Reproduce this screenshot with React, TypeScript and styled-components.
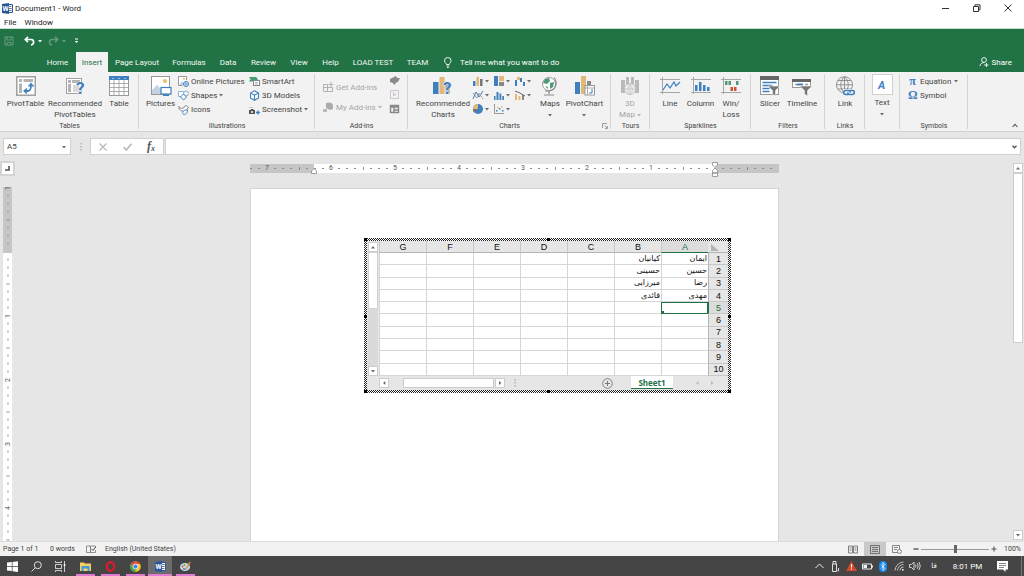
import React from "react";
import styled, { createGlobalStyle } from "styled-components";

const green = "#217346";
const blue = "#3f7fbf";
const tan = "#e3b778";
const ui = `Roboto, "Open Sans", sans-serif`;

const GlobalStyle = createGlobalStyle`
  *, *::before, *::after { box-sizing: border-box; }
  body { margin: 0; font-family: ${ui}; font-size: 8px; line-height: 11px; color: #444; }
  button, input { font: inherit; color: inherit; margin: 0; padding: 0; border: 0; background: none; border-radius: 0; }
  svg { display: block; flex: none; overflow: visible; }
`;

const AppShell = styled.div`
  display: flex;
  flex-direction: column;
  height: 100vh;
  overflow: hidden;
  background: #e6e6e6;
`;

/* ---------- title and menu ---------- */
const TitleBar = styled.header`
  display: flex;
  align-items: center;
  height: 16px;
  padding: 0 2px;
  gap: 2px;
  background: #fff;
  color: #222;
`;
const TitleText = styled.h1`
  flex: 1;
  margin: 0;
  font-size: 8px;
  font-weight: 400;
`;
const WindowButton = styled.button`
  display: flex;
  justify-content: center;
  width: 29px;
`;
const MenuBar = styled.nav`
  display: flex;
  gap: 8px;
  height: 13px;
  padding: 0 4px;
  background: #fff;
  border-bottom: 1px solid #c8dccf;
  color: #222;
`;

/* ---------- green header ---------- */
const QuickBar = styled.div`
  display: flex;
  align-items: center;
  height: 23px;
  padding-left: 4px;
  background: ${green};
  color: #fff;
`;
const QuickButton = styled.button<{ $w: number; $dim?: boolean }>`
  display: flex;
  align-items: center;
  gap: 3px;
  width: ${(p) => p.$w}px;
  color: #fff;
  opacity: ${(p) => (p.$dim ? 0.3 : 1)};
`;
const TabStrip = styled.nav`
  display: flex;
  align-items: stretch;
  height: 20px;
  padding: 0 12px 0 39px;
  background: ${green};
  color: #fff;
`;
const Tab = styled.button<{ $w: number; $active?: boolean }>`
  width: ${(p) => p.$w}px;
  white-space: nowrap;
  color: ${(p) => (p.$active ? green : "#f2f8f4")};
  background: ${(p) => (p.$active ? "#f2f2f2" : "transparent")};
`;
const TellMe = styled.button`
  display: flex;
  align-items: center;
  gap: 7px;
  margin-left: 8px;
  color: #fff;
`;
const Share = styled.button`
  display: flex;
  align-items: center;
  gap: 3px;
  margin-left: auto;
  color: #fff;
`;

/* ---------- ribbon ---------- */
const Ribbon = styled.section`
  display: flex;
  height: 60px;
  background: #f2f2f2;
  border-bottom: 1px solid #d2d2d2;
`;
const Group = styled.div<{ $w: number }>`
  display: flex;
  flex-direction: column;
  flex: none;
  width: ${(p) => p.$w}px;
  background: linear-gradient(#d4d4d4, #d4d4d4) right 2px / 1px 55px no-repeat;
  background-position: right 2px;
`;
const GroupBody = styled.div<{ $pad?: number }>`
  display: flex;
  align-items: flex-start;
  height: 49px;
  padding-left: ${(p) => p.$pad ?? 4}px;
`;
const GroupFoot = styled.div`
  display: flex;
  align-items: center;
  justify-content: center;
  position: relative;
  height: 11px;
  font-size: 7px;
  line-height: 10px;
`;
const Launcher = styled.button`
  position: absolute;
  right: 3px;
  top: 3px;
`;
const BigButton = styled.button<{ $w: number; $dim?: boolean }>`
  display: flex;
  flex-direction: column;
  align-items: center;
  width: ${(p) => p.$w}px;
  padding-top: 4px;
  gap: 2px;
  white-space: nowrap;
  opacity: ${(p) => (p.$dim ? 0.45 : 1)};
`;
const Caption = styled.span`
  display: flex;
  flex-direction: column;
  align-items: center;
`;
const CaptionLine = styled.span`
  display: flex;
  align-items: center;
  justify-content: center;
  gap: 2px;
  height: 11px;
`;
const Stack = styled.div<{ $w: number; $roomy?: boolean }>`
  display: flex;
  flex-direction: column;
  width: ${(p) => p.$w}px;
  padding-top: ${(p) => (p.$roomy ? 5 : 2)}px;
`;
const SmallButton = styled.button<{ $dim?: boolean; $h?: number }>`
  display: flex;
  align-items: center;
  gap: 2px;
  height: ${(p) => p.$h ?? 14}px;
  white-space: nowrap;
  opacity: ${(p) => (p.$dim ? 0.45 : 1)};
`;
const SymbolButton = styled(SmallButton)`
  gap: 3px;
`;
const ChartGrid = styled.div`
  display: grid;
  grid-template-columns: repeat(3, 21px);
  grid-auto-rows: 14px;
  padding-top: 2px;
`;
const TextTile = styled.span`
  display: flex;
  align-items: center;
  justify-content: center;
  width: 21px;
  height: 21px;
  border: 1px solid #d0d0d0;
  background: #fff;
`;
const TextButton = styled(BigButton)`
  padding-top: 2px;
`;
const SymbolGlyph = styled.span`
  width: 9px;
  font-family: "Liberation Serif", serif;
  font-size: 12px;
  font-weight: 700;
  color: ${blue};
`;
const Collapse = styled.button`
  margin: auto 6px 3px auto;
`;

/* ---------- formula bar ---------- */
const FormulaBar = styled.div`
  display: flex;
  align-items: center;
  height: 29px;
  padding: 0 3px;
`;
const NameBox = styled.div`
  display: flex;
  align-items: center;
  width: 68px;
  height: 17px;
  padding: 0 4px 0 3px;
  background: #fff;
  border: 1px solid #d0d0d0;
`;
const NameInput = styled.input`
  flex: 1;
  min-width: 0;
`;
const Grip = styled.span`
  display: flex;
  justify-content: center;
  width: 19px;
`;
const FormulaButtons = styled.div`
  display: flex;
  width: 74px;
  height: 17px;
  background: #fff;
  border: 1px solid #d0d0d0;
`;
const FormulaButton = styled.button`
  display: flex;
  flex: 1;
  align-items: center;
  justify-content: center;
`;
const FormulaField = styled.div`
  display: flex;
  flex: 1;
  align-items: center;
  height: 17px;
  margin-left: 1px;
  padding-right: 3px;
  background: #fff;
  border: 1px solid #d0d0d0;
`;

/* ---------- document area ---------- */
const Workspace = styled.main`
  display: flex;
  flex: 1;
  min-height: 0;
`;
const LeftRail = styled.div`
  display: flex;
  flex-direction: column;
  flex: none;
  width: 16px;
  min-height: 0;
`;
const TabSelector = styled.button`
  display: flex;
  align-items: center;
  justify-content: center;
  flex: none;
  width: 15px;
  height: 15px;
  margin-bottom: 8px;
  background: #fdfdfd;
  border: 2px solid #d4d4d4;
`;
const VRuler = styled.div`
  flex: 1;
  width: 9px;
  min-height: 0;
  margin-left: 3px;
  overflow: hidden;
  color: #555;
  background: linear-gradient(transparent 3px, #c6c6c6 3px 69px, #fff 69px);
`;
const VTick = styled.span`
  display: flex;
  align-items: center;
  justify-content: center;
  height: 8px;
  font-size: 7px;
  line-height: 8px;
  transform: rotate(-90deg);
`;
const Canvas = styled.div`
  display: flex;
  flex-direction: column;
  align-items: center;
  flex: 1;
  min-width: 0;
`;
const HRuler = styled.div`
  position: relative;
  flex: none;
  width: 529px;
  height: 9px;
  margin: 3px 0 15px;
  color: #555;
  background: linear-gradient(to right, #c6c6c6 64px, #fff 64px 465px, #c6c6c6 465px);
`;
const HTicks = styled.div`
  display: flex;
  justify-content: flex-end;
  height: 9px;
  padding-right: 4px;
  overflow: hidden;
`;
const HTick = styled.span`
  display: flex;
  flex: none;
  align-items: center;
  justify-content: center;
  width: 8px;
  font-size: 7px;
  line-height: 9px;
`;
const TickMark = styled.i<{ $tall?: boolean }>`
  width: ${(p) => (p.$tall ? 1 : 2)}px;
  height: ${(p) => (p.$tall ? 3 : 1)}px;
  background: #8c8c8c;
`;
const Marker = styled.svg<{ $x: number }>`
  position: absolute;
  left: ${(p) => p.$x}px;
  top: -2px;
`;
const Page = styled.article`
  flex: 1;
  width: 529px;
  min-height: 0;
  padding: 49px 0 0 113px;
  background: #fff;
  border: 1px solid #d4d4d4;
  border-bottom: 0;
`;
const VScroll = styled.div`
  display: flex;
  flex-direction: column;
  flex: none;
  width: 11px;
  padding: 2px 1px 1px 0;
`;
const ScrollButton = styled.button`
  display: flex;
  align-items: center;
  justify-content: center;
  flex: none;
  width: 10px;
  height: 10px;
  background: #fff;
  border: 1px solid #cdcdcd;
`;
const ScrollThumb = styled.div`
  width: 10px;
  height: 45%;
  background: #fff;
  border: 1px solid #cdcdcd;
`;
const Spacer = styled.div`
  flex: 1;
`;

/* ---------- embedded sheet ---------- */
const SheetFrame = styled.div`
  position: relative;
  width: 367px;
  padding: 3px;
  background: repeating-conic-gradient(#222 0 25%, #fff 0 50%) 0 0 / 2px 2px;
`;
const Handle = styled.i<{ $x: string; $y: string }>`
  position: absolute;
  left: ${(p) => p.$x};
  top: ${(p) => p.$y};
  width: 3px;
  height: 3px;
  background: #000;
`;
const SheetTop = styled.div`
  display: flex;
  background: #e6e6e6;
`;
const SheetScroll = styled.div`
  display: flex;
  flex-direction: column;
  width: 12px;
  padding: 1px 1px 0 1px;
`;
const SheetTrack = styled.div`
  flex: 1;
  width: 10px;
  background: #dadada;
`;
const SheetThumb = styled.div`
  width: 10px;
  height: 57px;
  background: #fff;
  border: 1px solid #d0d0d0;
`;
const Grid = styled.table`
  flex: 1;
  height: 135px;
  border-collapse: separate;
  border-spacing: 0;
  table-layout: fixed;
  font-family: "Liberation Sans", Arial, sans-serif;
  font-size: 9px;
  line-height: 10px;
  color: #111;
`;
const HeadCell = styled.th<{ $on?: boolean; $corner?: boolean }>`
  width: ${(p) => (p.$corner ? 20 : 47)}px;
  height: 12px;
  padding: 0;
  font-weight: 400;
  color: ${(p) => (p.$on ? green : "#111")};
  background: ${(p) => (p.$on ? "#dcdcdc" : "#e6e6e6")};
  border-bottom: 1px solid ${(p) => (p.$on ? green : "#b4b4b4")};
  border-left: ${(p) => (p.$corner ? 0 : 1)}px solid #c8c8c8;
`;
const RowHead = styled.th<{ $on?: boolean }>`
  padding: 0;
  font-weight: 400;
  color: ${(p) => (p.$on ? green : "#111")};
  background: ${(p) => (p.$on ? "#dcdcdc" : "#e6e6e6")};
  border-bottom: 1px solid #c8c8c8;
  border-left: 1px solid ${(p) => (p.$on ? green : "#b4b4b4")};
`;
const Cell = styled.td<{ $on?: boolean }>`
  position: relative;
  padding: 0 1px;
  text-align: right;
  white-space: nowrap;
  font-family: "DejaVu Sans", sans-serif;
  font-size: 8px;
  background: #fff;
  border-bottom: 1px solid #d6d6d6;
  border-left: 1px solid #d6d6d6;
  ${(p) => (p.$on ? `outline: 1px solid ${green}; outline-offset: -1px; z-index: 1;` : "")}
`;
const FillHandle = styled.i`
  position: absolute;
  left: -1px;
  bottom: -1px;
  width: 3px;
  height: 3px;
  background: ${green};
`;
const SheetBottom = styled.div`
  display: flex;
  align-items: center;
  height: 14px;
  padding-left: 12px;
  background: #e6e6e6;
`;
const SheetHThumb = styled.div`
  width: 91px;
  height: 10px;
  margin: 0 1px 0 14px;
  background: #fff;
  border: 1px solid #cdcdcd;
`;
const AddSheet = styled.button`
  margin-left: 78px;
`;
const SheetTab = styled.button`
  align-self: flex-start;
  width: 42px;
  height: 13px;
  margin: 0 22px 0 18px;
  background: #fff;
  border-bottom: 1px solid ${green};
  color: ${green};
  font-family: "Open Sans", sans-serif;
  font-weight: 700;
`;
const SheetArrows = styled.span`
  display: flex;
  gap: 11px;
`;

/* ---------- status bar ---------- */
const StatusBar = styled.footer`
  display: flex;
  align-items: center;
  height: 15px;
  padding: 0 3px;
  background: #f2f2f2;
  border-top: 1px solid #dcdcdc;
  font-size: 7px;
  line-height: 10px;
`;
const StatusItem = styled.span<{ $w: number }>`
  width: ${(p) => p.$w}px;
  white-space: nowrap;
`;
const ViewButton = styled.button<{ $on?: boolean }>`
  display: flex;
  align-items: center;
  justify-content: center;
  width: 22px;
  height: 14px;
  background: ${(p) => (p.$on ? "#c8c8c8" : "transparent")};
`;
const ViewButtons = styled.div`
  display: flex;
  margin-right: 4px;
`;
const ZoomButton = styled.button`
  display: flex;
  justify-content: center;
  width: 8px;
`;
const ZoomSlider = styled.input`
  appearance: none;
  width: 68px;
  height: 8px;
  margin: 0 1px;
  background: linear-gradient(#9a9a9a, #9a9a9a) center / 100% 1px no-repeat;
  &::-webkit-slider-thumb {
    appearance: none;
    width: 3px;
    height: 8px;
    background: #666;
  }
`;
const ZoomLabel = styled.span`
  width: 23px;
  text-align: right;
`;

/* ---------- taskbar ---------- */
const TaskBar = styled.footer`
  display: flex;
  align-items: stretch;
  height: 20px;
  background: #454545;
  color: #fff;
`;
const TaskButton = styled.button`
  display: flex;
  align-items: center;
  justify-content: center;
  width: 24px;
`;
const RunningApps = styled.div`
  display: flex;
  gap: 1px;
  margin-left: 1px;
`;
const AppButton = styled(TaskButton)<{ $on?: boolean }>`
  background: linear-gradient(#e07bd3, #e07bd3) bottom / ${(p) => (p.$on ? 24 : 19)}px 2px no-repeat
    ${(p) => (p.$on ? "#6c6c6c" : "transparent")};
`;
const Tray = styled.div`
  display: flex;
  margin-left: auto;
  padding-right: 7px;
  margin-right: 2px;
  border-right: 1px solid #777;
`;
const TrayButton = styled.button<{ $w?: number }>`
  display: flex;
  align-items: center;
  justify-content: center;
  width: ${(p) => p.$w ?? 16}px;
  white-space: nowrap;
  color: #fff;
`;
const Language = styled(TrayButton)`
  font-family: "DejaVu Sans", sans-serif;
  font-size: 7px;
`;

/* ---------- drawings ---------- */
type ArtProps = { w: number; h?: number; children: React.ReactNode };
const Art = ({ w, h = w, children }: ArtProps) => (
  <svg width={w} height={h} viewBox={`0 0 ${w} ${h}`} fill="none" aria-hidden="true">
    {children}
  </svg>
);

const Arrow = ({ dir = "down", color = "#6c6c6c" }: { dir?: "up" | "down" | "left" | "right"; color?: string }) => {
  const d = { down: "M0 1h4L2 3.4z", up: "M0 3.4h4L2 1z", left: "M3.4 0v4L1 2z", right: "M1 0v4L3.4 2z" }[dir];
  return (
    <Art w={4}>
      <path d={d} fill={color} />
    </Art>
  );
};

const WordArt = () => (
  <Art w={11}>
    <path d="M5.5 1.5h5v8h-5" stroke="#2b579a" fill="#fff" />
    <path d="M7 3.5h2.5M7 5.5h2.5M7 7.5h2.5" stroke="#2b579a" strokeWidth=".8" />
    <path d="M0 1l7-1v11L0 10z" fill="#2b579a" />
    <text x=".4" y="8" fontSize="7" fontWeight="700" fill="#fff">W</text>
  </Art>
);

const Question = ({ x }: { x: number }) => (
  <text x={x} y="18" fontSize="17" fontWeight="700" fill={blue} stroke="#f2f2f2" strokeWidth="1" paintOrder="stroke">?</text>
);

const PivotArt = () => (
  <Art w={20}>
    <rect x=".75" y=".75" width="18.5" height="18.5" fill="#fff" stroke="#a0a0a0" strokeWidth="1.5" />
    <path d="M3 3h3v3H3zM7.5 3H17v3H7.5zM3 7.5h3V17H3z" fill="#b4b4b4" />
    <path d="M9 15h2.5c3 0 3.5-2 3.5-6" stroke={blue} strokeWidth="1.8" />
    <path d="M12.5 10.5L15 7.5l2.5 3M11 12.5L8 15l3 2.5" stroke={blue} strokeWidth="1.3" />
  </Art>
);
const RecPivotArt = () => (
  <Art w={20}>
    <rect x="1.5" y="2.5" width="15" height="15" fill="#fff" stroke="#a0a0a0" />
    <path d="M3 4h3v3H3zM7 4h8v3H7zM3 8h3v8H3z" fill="#b4b4b4" />
    <path d="M8 9h6v7H8z" fill="#d8d8d8" />
    <Question x={11} />
  </Art>
);
const TableArt = () => (
  <Art w={20}>
    <rect x=".5" y=".5" width="19" height="19" fill="#fff" stroke="#999" />
    <path d="M0 0h20v4H0z" fill={blue} />
    <path d="M3 2l1 1 1-1zM9 2l1 1 1-1zM15 2l1 1 1-1z" fill="#fff" />
    <path d="M5 4v16M10 4v16M15 4v16M0 7.5h20M0 11.5h20M0 15.5h20" stroke="#999" strokeWidth=".8" />
  </Art>
);
const PictureArt = () => (
  <Art w={22} h={20}>
    <rect x="1.5" y=".5" width="18" height="18" fill="#fff" stroke="#999" />
    <path d="M2 18v-4l5-5 4 4v5z" fill="#c3d3e2" />
    <circle cx="15" cy="5" r="2" fill="#eeba63" />
    <rect x="11" y="11.5" width="10" height="6.5" fill="#fff" stroke={blue} strokeWidth="1.2" />
    <path d="M13 19.5h6M16 18v2" stroke={blue} />
  </Art>
);
const OnlinePictureArt = () => (
  <Art w={11}>
    <path d="M8.5 4V.5h-8v9h4" fill="#fff" stroke="#999" />
    <path d="M1 9l3-4 2 3v1z" fill="#c3d3e2" />
    <circle cx="6" cy="2.8" r="1" fill="#eeba63" />
    <circle cx="8" cy="8" r="2.5" fill="#fff" stroke={blue} />
    <path d="M5.5 8h5M8 5.5v5" stroke={blue} strokeWidth=".7" />
  </Art>
);
const ShapesArt = () => (
  <Art w={11}>
    <path d="M.5 1.5h5v5h-5z" fill="#fff" stroke="#8db3d9" />
    <circle cx="8" cy="3.5" r="2.5" fill="#f2f2f2" stroke="#8db3d9" />
    <path d="M5.5 4l3 3-3 3-3-3z" fill="#fff" stroke={blue} />
  </Art>
);
const IconsArt = () => (
  <Art w={11}>
    <path d="M.8 2.5c2 2.5 3.5 2 5 1.5C6 1.5 9 .8 9.5 3l1 .5-1 .7C9 7 6.5 8 4 7 2 6.5 1 4.5.8 2.5z" fill="#fff" stroke="#777" strokeWidth=".9" />
    <path d="M5.5 10.5c-2-3 0-4.5 4-4.5 0 3-1 4.5-4 4.5z" fill="#fff" stroke={blue} strokeWidth=".9" />
  </Art>
);
const SmartArtArt = () => (
  <Art w={11}>
    <path d="M0 1h7l2 2.2L7 5.5H0L1.5 3.2z" fill="#4c9a76" />
    <rect x="4.5" y="4.5" width="6" height="5" fill="#fff" stroke="#888" />
    <path d="M6 6.5h3M6 8h3" stroke="#999" strokeWidth=".7" />
  </Art>
);
const CubeArt = () => (
  <Art w={11}>
    <path d="M5.5.8l4 2.2v5l-4 2.3-4-2.3V3zM1.5 3l4 2.2 4-2.2M5.5 5.2v5" stroke={blue} strokeWidth="1.1" fill="#fff" />
  </Art>
);
const ScreenshotArt = () => (
  <Art w={11}>
    <path d="M.5 3.5h4" stroke="#999" strokeDasharray="1 1" />
    <path d="M0 6h1.5l.7-1h2l.7 1H6v4H0z" fill="#555" />
    <circle cx="3" cy="8" r="1.1" fill="#f2f2f2" />
    <path d="M7 8.5h4M9 6.5v4" stroke={blue} strokeWidth="1.3" />
  </Art>
);
const StoreArt = () => (
  <Art w={11}>
    <path d="M.5 2.5h4v7h-4zM4.5 9.5h5v-4h-9M4.5 5.5v4M8 0v5M5.5 2.5h5" stroke="#666" />
  </Art>
);
const MyAddinsArt = () => (
  <Art w={11}>
    <path d="M3 1l5-.5L10 3v4L7 8 3 6z" fill="#555" />
    <path d="M0 7h4v3H0z" fill="#777" />
  </Art>
);
const AddinMini = ({ kind }: { kind: number }) => (
  <Art w={10}>
    {kind === 0 && <path d="M0 3l6-3 1 2h3l-2 4H7L4 9 3 7 0 6z" fill="#8a8a8a" />}
    {kind === 1 && <path d="M.5.5h8v8h-8zM3.5 2v4l2.5-1.5-1.5-1" stroke="#cfc4d0" />}
    {kind === 2 && <path d="M.5 1.5h8v7h-8zM0 3h9M4 3v6M4 6h5" stroke="#8a8a8a" strokeWidth="1.4" />}
  </Art>
);
const RecChartArt = () => (
  <Art w={20}>
    <path d="M0 6h5.5v12H0z" fill={blue} />
    <path d="M6.5 1h5v17h-5z" fill={tan} />
    <path d="M12.5 7h4v11h-4z" fill="#8a8a8a" />
    <Question x={10} />
  </Art>
);
const chartKinds: React.ReactNode[] = [
  <><path d="M0 5h2.5v5H0z" fill={blue} /><path d="M3.5 1H6v9H3.5z" fill={tan} /><path d="M7 3h2.5v7H7z" fill="#777" /></>,
  <><path d="M0 0h4v10H0z" fill={blue} /><path d="M5 0h5v5H5z" fill={tan} /><path d="M5 6h5v4H5z" fill="#888" /></>,
  <><path d="M0 4h2v6H0z" fill={blue} /><path d="M2 1h3v3H2z" fill={tan} /><path d="M5 2h2v4H5zM8 6h2v4H8z" fill={blue} /></>,
  <><path d="M0 9l3-7 3 5 4-6" stroke={blue} /><path d="M0 3l4 5 2-5 4 6" stroke="#888" strokeDasharray="2 1" /></>,
  <path d="M0 6h1.5v4H0zM2.5 2h2v8h-2zM5.5 3.5h1.8V10H5.5zM8.3 6H10v4H8.3z" fill={blue} />,
  <><path d="M0 4h2v6H0zM3.5 6h2v4h-2z" fill={tan} /><path d="M7 5h2v5H7z" fill="#888" /><path d="M0 1l5 2 5 3" stroke="#666" /></>,
  <><circle cx="5" cy="5" r="5" fill={blue} /><path d="M5 5V0A5 5 0 0 0 0 5z" fill={tan} /><path d="M5 5l-4 3.5A5 5 0 0 1 0 5z" fill="#777" /></>,
  <><path d="M.5 0v9.5H10" stroke="#999" /><path d="M2 6h1.5v1.5H2zM5 4h1.5v1.5H5zM8 6h1.5v1.5H8z" fill={blue} /><path d="M3 3h1.5v1.5H3zM7 2h1.5v1.5H7z" fill={tan} /></>,
];
const MapsArt = () => (
  <Art w={20}>
    <circle cx="9" cy="8" r="6.5" fill="#fff" stroke="#9a9a9a" />
    <path d="M5 3l4-1 1 3-3 3-4-1zM10 7l4-1-1 5-3 2zM5 10l3 1v2z" fill="#4c9a76" />
    <path d="M14 1.5c4 5 2 13-5 13.5H5M9 15v3M4 19h10" stroke="#8a8a8a" strokeWidth="1.2" />
  </Art>
);
const PivotChartArt = () => (
  <Art w={20}>
    <path d="M0 6h5v12H0z" fill={blue} />
    <path d="M6 0h5v18H6z" fill={tan} />
    <path d="M12 5h4v5h-4z" fill="#8a8a8a" />
    <rect x="10" y="9.5" width="9.5" height="9.5" fill="#fff" stroke="#999" />
    <path d="M10 12h9M12.5 9v10" stroke="#aaa" />
    <path d="M14 17h3v-4" stroke={blue} />
  </Art>
);
const MapArt = () => (
  <Art w={20}>
    <path d="M1 4h4v13H1zM6 1h3v16H6zM11 1h3v16h-3zM15 4h4v13h-4z" fill="#777" />
    <circle cx="10" cy="13" r="5.5" fill="#f2f2f2" stroke="#888" />
    <path d="M5 13h10M10 8v11M10 8c-3 2-3 9 0 11M10 8c3 2 3 9 0 11" stroke="#888" strokeWidth=".8" />
  </Art>
);
const SparkFrame = () => <path d="M2.5 1v17M0 3.5h20M0 16.5h20" stroke="#a6a6a6" />;
const LineArt = () => (
  <Art w={20}><SparkFrame /><path d="M3 14l4-6 3 4 4-6 2 4 4-4" stroke={blue} strokeWidth="1.2" /></Art>
);
const ColumnArt = () => (
  <Art w={20}><SparkFrame /><path d="M4 9h2.5v6H4zM8 6h2.5v9H8zM12 9h2.5v6H12zM16 11h2.5v4H16z" fill={blue} /></Art>
);
const WinArt = () => (
  <Art w={20}><SparkFrame /><path d="M4 5h2.5v4H4zM7.5 5H10v4H7.5zM15 5h2.5v4H15z" fill="#4c9a76" /><path d="M9.5 11H12v4H9.5zM13 11h2.5v4H13z" fill="#d35230" /></Art>
);
const Funnel = () => <path d="M8 10h12l-4.5 4.5V20l-3-2v-3.5z" fill="#777" stroke="#f2f2f2" strokeWidth=".6" />;
const SlicerArt = () => (
  <Art w={20}>
    <rect x=".5" y=".5" width="18" height="18" fill="#fff" stroke="#999" />
    <path d="M0 0h19v4H0z" fill="#666" />
    <path d="M2.5 6.5h14M2.5 9.5h10M2.5 12.5h7M2.5 15.5h7" stroke={blue} strokeWidth="1.7" />
    <Funnel />
  </Art>
);
const TimelineArt = () => (
  <Art w={20}>
    <rect x=".5" y="3.5" width="18" height="8" fill="#fff" stroke="#999" />
    <path d="M0 3h19v3H0z" fill="#666" />
    <path d="M3 8.5h2M13 8.5h3" stroke="#999" strokeWidth="1.5" />
    <path d="M5 8.5h6" stroke={blue} strokeWidth="2" />
    <Funnel />
  </Art>
);
const LinkArt = () => (
  <Art w={20}>
    <path d="M9.5.8a8 8 0 1 0 .01 0zM9.5.8v16M1.5 8.8h16M9.5.8c-5 4-5 12 0 16M9.5.8c5 4 5 12 0 16M3 4.5h13M3 13h13" stroke="#888" strokeWidth=".9" />
    <rect x="8" y="13" width="12" height="7" fill="#f2f2f2" />
    <path d="M13.5 18.5h-2.8a2 2 0 0 1 0-4h2.5a2 2 0 0 1 2 2M14.5 14.5h2.8a2 2 0 0 1 0 4h-2.5a2 2 0 0 1-2-2" stroke={blue} strokeWidth="1.6" />
  </Art>
);

/* ---------- ribbon helpers ---------- */
type BigProps = { w: number; art: React.ReactNode; lines: string[]; menu?: boolean; dim?: boolean };
const Big = ({ w, art, lines, menu, dim }: BigProps) => (
  <BigButton $w={w} $dim={dim}>
    {art}
    <Caption>
      {lines.map((line, i) => (
        <CaptionLine key={line}>
          {line}
          {dim && menu && i === lines.length - 1 && <Arrow />}
        </CaptionLine>
      ))}
      {menu && !dim && <CaptionLine><Arrow /></CaptionLine>}
    </Caption>
  </BigButton>
);
type SmallProps = { art: React.ReactNode; label: string; menu?: boolean; dim?: boolean; h?: number };
const Small = ({ art, label, menu, dim, h }: SmallProps) => (
  <SmallButton $dim={dim} $h={h}>
    {art}
    {label}
    {menu && <Arrow />}
  </SmallButton>
);

const tabs: [string, number][] = [
  ["Home", 37], ["Insert", 32], ["Page Layout", 58], ["Formulas", 46], ["Data", 32],
  ["Review", 39], ["View", 32], ["Help", 31], ["LOAD TEST", 54], ["TEAM", 35],
];
const columns = ["A", "B", "C", "D", "E", "F", "G"];
const people: string[][] = [["ایمان", "کیانیان"], ["حسین", "حسینی"], ["رضا", "میرزایی"], ["مهدی", "قائدی"]];

const tick = (step: number) => {
  const n = Math.abs(step);
  if (n === 0) return null;
  if (n % 8 === 0) return n / 8;
  return <TickMark $tall={n % 4 === 0} />;
};
const hSteps = Array.from({ length: 67 }, (_, i) => 59 - i);
const vSteps = Array.from({ length: 46 }, (_, i) => i - 8);
const handleSpots = ["0px", "calc(50% - 1px)", "calc(100% - 3px)"];

export default function App() {
  return (
    <AppShell>
      <GlobalStyle />
      <TitleBar>
        <WordArt />
        <TitleText>Document1 - Word</TitleText>
        <WindowButton aria-label="Minimize"><Art w={8}><path d="M0 4.5h7" stroke="#333" /></Art></WindowButton>
        <WindowButton aria-label="Restore"><Art w={8}><path d="M.5 2.5h5v5h-5zM2 2V.8h5v5H6" stroke="#333" /></Art></WindowButton>
        <WindowButton aria-label="Close"><Art w={8}><path d="M.5.5l7 7M7.5.5l-7 7" stroke="#333" /></Art></WindowButton>
      </TitleBar>
      <MenuBar>
        <button>File</button>
        <button>Window</button>
      </MenuBar>

      <QuickBar>
        <QuickButton $w={20} $dim aria-label="Save">
          <Art w={10}><path d="M1 1h8v8H1zM3 1v3h4V1M3 9V6.5h4V9" stroke="#fff" /></Art>
        </QuickButton>
        <QuickButton $w={24} aria-label="Undo">
          <Art w={11} h={10}><path d="M4 .8L1.3 3.5 4 6.2M1.5 3.5H7c3.5 0 3.5 5 0 5.5" stroke="#fff" strokeWidth="1.7" /></Art>
          <Arrow color="#fff" />
        </QuickButton>
        <QuickButton $w={26} $dim aria-label="Redo">
          <Art w={11} h={10}><path d="M7 .8l2.7 2.7L7 6.2M9.5 3.5H4c-3.5 0-3.5 5 0 5.5" stroke="#fff" strokeWidth="1.4" /></Art>
          <Arrow color="#fff" />
        </QuickButton>
        <QuickButton $w={8} aria-label="Customize toolbar">
          <Art w={5} h={6}><path d="M1 1h3" stroke="#fff" /><path d="M.8 3h3.4l-1.7 2z" fill="#fff" /></Art>
        </QuickButton>
      </QuickBar>
      <TabStrip>
        {tabs.map(([name, w]) => (
          <Tab key={name} $w={w} $active={name === "Insert"}>{name}</Tab>
        ))}
        <TellMe>
          <Art w={10} h={11}><path d="M3.5 7.5C3 6 1.5 5.5 1.5 3.8a3.3 3.3 0 0 1 6.6 0C8.1 5.5 6.6 6 6.2 7.5zM3.5 9h2.7M4 10.5h1.7" stroke="#fff" strokeWidth=".9" /></Art>
          Tell me what you want to do
        </TellMe>
        <Share>
          <Art w={10}><circle cx="5" cy="3" r="2.4" stroke="#fff" strokeWidth=".9" /><path d="M.8 9c.5-2 2-3.2 4.2-3.5M5 8h4.5M7.5 6v4" stroke="#fff" strokeWidth=".9" /></Art>
          Share
        </Share>
      </TabStrip>

      <Ribbon>
        <Group $w={139}>
          <GroupBody $pad={5}>
            <Big w={41} art={<PivotArt />} lines={["PivotTable"]} />
            <Big w={58} art={<RecPivotArt />} lines={["Recommended", "PivotTables"]} />
            <Big w={30} art={<TableArt />} lines={["Table"]} />
          </GroupBody>
          <GroupFoot>Tables</GroupFoot>
        </Group>
        <Group $w={176}>
          <GroupBody>
            <Big w={35} art={<PictureArt />} lines={["Pictures"]} />
            <Stack $w={71}>
              <Small art={<OnlinePictureArt />} label="Online Pictures" />
              <Small art={<ShapesArt />} label="Shapes" menu />
              <Small art={<IconsArt />} label="Icons" />
            </Stack>
            <Stack $w={62}>
              <Small art={<SmartArtArt />} label="SmartArt" />
              <Small art={<CubeArt />} label="3D Models" />
              <Small art={<ScreenshotArt />} label="Screenshot" menu />
            </Stack>
          </GroupBody>
          <GroupFoot>Illustrations</GroupFoot>
        </Group>
        <Group $w={93}>
          <GroupBody $pad={8}>
            <Stack $w={67} $roomy>
              <Small art={<StoreArt />} label="Get Add-ins" dim h={20} />
              <Small art={<MyAddinsArt />} label="My Add-ins" menu dim h={20} />
            </Stack>
            <Stack $w={12}>
              {["Visio", "Bing", "People"].map((name, i) => (
                <SmallButton key={name} aria-label={name}><AddinMini kind={i} /></SmallButton>
              ))}
            </Stack>
          </GroupBody>
          <GroupFoot>Add-ins</GroupFoot>
        </Group>
        <Group $w={203}>
          <GroupBody $pad={5}>
            <Big w={60} art={<RecChartArt />} lines={["Recommended", "Charts"]} />
            <ChartGrid>
              {chartKinds.map((art, i) => (
                <SmallButton key={i} aria-label={`Chart type ${i + 1}`}>
                  <Art w={10}>{art}</Art>
                  <Arrow />
                </SmallButton>
              ))}
            </ChartGrid>
            <Big w={28} art={<MapsArt />} lines={["Maps"]} menu />
            <Big w={41} art={<PivotChartArt />} lines={["PivotChart"]} menu />
          </GroupBody>
          <GroupFoot>
            Charts
            <Launcher aria-label="Chart options"><Art w={6}><path d="M.5 5V.5H5M2.5 2.5L5 5M5.5 3v2.5H3" stroke="#888" strokeWidth=".8" /></Art></Launcher>
          </GroupFoot>
        </Group>
        <Group $w={39}>
          <GroupBody>
            <Big w={30} art={<MapArt />} lines={["3D", "Map"]} menu dim />
          </GroupBody>
          <GroupFoot>Tours</GroupFoot>
        </Group>
        <Group $w={101}>
          <GroupBody $pad={5}>
            <Big w={30} art={<LineArt />} lines={["Line"]} />
            <Big w={31} art={<ColumnArt />} lines={["Column"]} />
            <Big w={30} art={<WinArt />} lines={["Win/", "Loss"]} />
          </GroupBody>
          <GroupFoot>Sparklines</GroupFoot>
        </Group>
        <Group $w={74}>
          <GroupBody>
            <Big w={30} art={<SlicerArt />} lines={["Slicer"]} />
            <Big w={34} art={<TimelineArt />} lines={["Timeline"]} />
          </GroupBody>
          <GroupFoot>Filters</GroupFoot>
        </Group>
        <Group $w={40}>
          <GroupBody>
            <Big w={32} art={<LinkArt />} lines={["Link"]} />
          </GroupBody>
          <GroupFoot>Links</GroupFoot>
        </Group>
        <Group $w={35}>
          <GroupBody $pad={2}>
            <TextButton $w={30}>
              <TextTile><Art w={10}><text x="1" y="9" fontSize="11" fontWeight="700" fontStyle="italic" fill={blue}>A</text></Art></TextTile>
              <Caption>
                <CaptionLine>Text</CaptionLine>
                <CaptionLine><Arrow /></CaptionLine>
              </Caption>
            </TextButton>
          </GroupBody>
        </Group>
        <Group $w={68}>
          <GroupBody $pad={8}>
            <Stack $w={56}>
              <SymbolButton><SymbolGlyph>π</SymbolGlyph>Equation<Arrow /></SymbolButton>
              <SymbolButton><SymbolGlyph>Ω</SymbolGlyph>Symbol</SymbolButton>
            </Stack>
          </GroupBody>
          <GroupFoot>Symbols</GroupFoot>
        </Group>
        <Collapse aria-label="Collapse ribbon"><Art w={6} h={5}><path d="M.5 4L3 1.3 5.5 4" stroke="#555" strokeWidth="1.1" /></Art></Collapse>
      </Ribbon>

      <FormulaBar>
        <NameBox>
          <NameInput aria-label="Name box" defaultValue="A5" />
          <button aria-label="Name list"><Arrow /></button>
        </NameBox>
        <Grip><Art w={2} h={8}><path d="M1 0v8" stroke="#999" strokeDasharray="1.5 1.5" /></Art></Grip>
        <FormulaButtons>
          <FormulaButton aria-label="Cancel"><Art w={8}><path d="M.5.5l7 7M7.5.5l-7 7" stroke="#b8b8b8" strokeWidth="1.2" /></Art></FormulaButton>
          <FormulaButton aria-label="Enter"><Art w={9} h={8}><path d="M.5 4l2.8 3L8.5.8" stroke="#b8b8b8" strokeWidth="1.6" /></Art></FormulaButton>
          <FormulaButton aria-label="Insert function">
            <Art w={10} h={12}><text x="1" y="9" fontFamily="Liberation Serif, serif" fontSize="12" fontStyle="italic" fontWeight="700" fill="#555">f</text><text x="5" y="10" fontFamily="Liberation Serif, serif" fontSize="8" fontStyle="italic" fontWeight="700" fill="#555">x</text></Art>
          </FormulaButton>
        </FormulaButtons>
        <FormulaField>
          <NameInput aria-label="Formula" />
          <button aria-label="Expand formula bar"><Art w={5} h={4}><path d="M.5.8l2 2 2-2" stroke="#555" strokeWidth="1.4" /></Art></button>
        </FormulaField>
      </FormulaBar>

      <Workspace>
        <LeftRail>
          <TabSelector aria-label="Tab selector"><Art w={5}><path d="M4 0v4H0" stroke="#555" strokeWidth="1.6" /></Art></TabSelector>
          <VRuler>
            {vSteps.map((s) => <VTick key={s}>{tick(s)}</VTick>)}
          </VRuler>
        </LeftRail>
        <Canvas>
          <HRuler>
            <HTicks>
              {hSteps.map((s) => <HTick key={s}>{tick(s)}</HTick>)}
            </HTicks>
            <Marker $x={61} width="6" height="14"><path d="M.5 11.5V9L3 6.5 5.5 9v2.5z" fill="#fff" stroke="#888" strokeWidth=".8" /></Marker>
            <Marker $x={462} width="6" height="15"><path d="M.5.5h5V3L3 5.5.5 3zM.5 11V8.5L3 6l2.5 2.5V11zM.5 11h5v3.5h-5z" fill="#fff" stroke="#888" strokeWidth=".8" /></Marker>
          </HRuler>
          <Page>
            <SheetFrame>
              <SheetTop>
                <SheetScroll>
                  <ScrollButton aria-label="Scroll sheet up"><Arrow dir="up" /></ScrollButton>
                  <SheetThumb />
                  <SheetTrack />
                  <ScrollButton aria-label="Scroll sheet down"><Arrow /></ScrollButton>
                </SheetScroll>
                <Grid dir="rtl">
                  <thead>
                    <tr>
                      <HeadCell $corner aria-label="Select all"><Art w={19} h={10}><path d="M2 9V2l8 7z" fill="#b4b4b4" /></Art></HeadCell>
                      {columns.map((c) => <HeadCell key={c} scope="col" $on={c === "A"}>{c}</HeadCell>)}
                    </tr>
                  </thead>
                  <tbody>
                    {Array.from({ length: 10 }, (_, r) => (
                      <tr key={r}>
                        <RowHead scope="row" $on={r === 4}>{r + 1}</RowHead>
                        {columns.map((c, i) => {
                          const on = r === 4 && i === 0;
                          return <Cell key={c} $on={on}>{people[r]?.[i]}{on && <FillHandle />}</Cell>;
                        })}
                      </tr>
                    ))}
                  </tbody>
                </Grid>
              </SheetTop>
              <SheetBottom>
                <ScrollButton aria-label="Scroll sheet left"><Arrow dir="left" /></ScrollButton>
                <SheetHThumb />
                <ScrollButton aria-label="Scroll sheet right"><Arrow dir="right" /></ScrollButton>
                <Grip><Art w={2} h={8}><path d="M1 0v8" stroke="#999" strokeDasharray="1.5 1.5" /></Art></Grip>
                <AddSheet aria-label="New sheet"><Art w={11}><circle cx="5.5" cy="5.5" r="4.8" stroke="#777" strokeWidth=".9" /><path d="M3 5.5h5M5.5 3v5" stroke="#777" /></Art></AddSheet>
                <SheetTab>Sheet1</SheetTab>
                <SheetArrows><Arrow dir="left" color="#b8b8b8" /><Arrow dir="right" color="#b8b8b8" /></SheetArrows>
              </SheetBottom>
              {handleSpots.map((x) => handleSpots.map((y) =>
                x === handleSpots[1] && y === handleSpots[1] ? null : <Handle key={x + y} $x={x} $y={y} />
              ))}
            </SheetFrame>
          </Page>
        </Canvas>
        <VScroll>
          <ScrollButton aria-label="Scroll up"><Arrow dir="up" /></ScrollButton>
          <ScrollThumb />
          <Spacer />
          <ScrollButton aria-label="Scroll down"><Arrow /></ScrollButton>
        </VScroll>
      </Workspace>

      <StatusBar>
        <StatusItem $w={47}>Page 1 of 1</StatusItem>
        <StatusItem $w={36}>0 words</StatusItem>
        <StatusItem $w={19}><Art w={10} h={9}><path d="M.5 1h4v6.5h-4zM4.5 7.5V1h5v2M4.5 7.5h5V5" stroke="#777" strokeWidth=".8" /><path d="M5.5 4l1.5 1.5L9.5 2" stroke="#555" /></Art></StatusItem>
        <StatusItem $w={80}>English (United States)</StatusItem>
        <Spacer />
        <ViewButtons>
          <ViewButton aria-label="Read mode"><Art w={10} h={9}><path d="M.5 1h4v7h-4zM5.5 1h4v7h-4zM1.5 3h2M1.5 5h2M6.5 3h2M6.5 5h2" stroke="#777" strokeWidth=".9" /></Art></ViewButton>
          <ViewButton $on aria-label="Print layout"><Art w={10} h={9}><path d="M.5.5h9v8h-9zM2 2.5h6M2 4.5h6M2 6.5h6" stroke="#666" strokeWidth=".9" /></Art></ViewButton>
          <ViewButton aria-label="Web layout"><Art w={10} h={9}><path d="M.5.5h7v7h-7zM2 2.5h4M2 4.5h3" stroke="#777" strokeWidth=".9" /><circle cx="7.5" cy="6.5" r="2" fill="#f2f2f2" stroke="#777" strokeWidth=".9" /></Art></ViewButton>
        </ViewButtons>
        <ZoomButton aria-label="Zoom out"><Art w={6}><path d="M.5 3h5" stroke="#555" strokeWidth="1.4" /></Art></ZoomButton>
        <ZoomSlider type="range" aria-label="Zoom" min={10} max={190} defaultValue={100} />
        <ZoomButton aria-label="Zoom in"><Art w={6}><path d="M.5 3h5M3 .5v5" stroke="#555" strokeWidth="1.1" /></Art></ZoomButton>
        <ZoomLabel>100%</ZoomLabel>
      </StatusBar>

      <TaskBar>
        <TaskButton aria-label="Start"><Art w={11}><path d="M0 1.6L4.8 1v4.2H0zM5.5.9L11 .2v5H5.5zM0 5.9h4.8V10L0 9.4zM5.5 5.9H11v5l-5.5-.7z" fill="#fff" /></Art></TaskButton>
        <TaskButton aria-label="Search"><Art w={11}><circle cx="6.8" cy="4.2" r="3.5" stroke="#eee" strokeWidth=".9" /><path d="M4.3 6.8L.5 10.5" stroke="#eee" strokeWidth=".9" /></Art></TaskButton>
        <TaskButton aria-label="Task view"><Art w={12} h={11}><path d="M1.5 3.5h6v4h-6zM1.5 0v1.5h6V0M1.5 11V9.5h6V11M10.5 0v11" stroke="#ddd" strokeWidth=".9" /><path d="M9.7 3h1.6v2H9.7z" fill="#fff" /></Art></TaskButton>
        <RunningApps>
          <AppButton aria-label="File Explorer"><Art w={11}><path d="M0 1.5h4l1 1h6V10H0z" fill="#f7cf5f" /><path d="M1.5 5h8v5h-8z" fill="#3f9bdc" /><path d="M3.5 7.5h4V10h-4z" fill="#f7cf5f" /></Art></AppButton>
          <AppButton aria-label="Opera"><Art w={11}><ellipse cx="5.5" cy="5.5" rx="3.7" ry="4.3" stroke="#e2182c" strokeWidth="2.2" /></Art></AppButton>
          <AppButton aria-label="Chrome"><Art w={11}>
            <circle cx="5.5" cy="5.5" r="5.3" fill="#f9c321" />
            <path d="M.9 2.8a5.3 5.3 0 0 1 9.3.2H5.5L3.2 6.8z" fill="#dd4b3e" />
            <path d="M.9 2.8a5.3 5.3 0 0 0 4 8l2.6-4-4.3 0z" fill="#3fa757" />
            <circle cx="5.5" cy="5.5" r="2.5" fill="#4a86e8" stroke="#fff" strokeWidth=".8" />
          </Art></AppButton>
          <AppButton $on aria-label="Word"><WordArt /></AppButton>
          <AppButton aria-label="Paint"><Art w={11}>
            <ellipse cx="5" cy="6" rx="5" ry="4" fill="#c9dcea" />
            <circle cx="2.5" cy="5.5" r="1" fill="#d9534f" /><circle cx="4.5" cy="4" r="1" fill="#4caf50" /><circle cx="4" cy="8" r="1" fill="#2f7fd0" />
            <path d="M5.5 9L10 1" stroke="#d98e3a" strokeWidth="1.5" />
          </Art></AppButton>
        </RunningApps>
        <Tray>
          <TrayButton aria-label="Show hidden icons"><Art w={9} h={6}><path d="M.5 5l4-4 4 4" stroke="#eee" /></Art></TrayButton>
          <TrayButton aria-label="USB device"><Art w={8} h={11}><path d="M1.5 3h4v7.5h-4zM2 3V.5h3V3M6.5 10h1V7" stroke="#eee" strokeWidth=".9" /></Art></TrayButton>
          <TrayButton aria-label="Warning"><Art w={11} h={10}><path d="M5.5 0L11 10H0z" fill="#d9452b" /><path d="M5.5 3v3.5M5.5 7.5v1.2" stroke="#fff" strokeWidth="1.2" /></Art></TrayButton>
          <TrayButton aria-label="Battery"><Art w={11} h={7}><path d="M.5 1h9v5h-9z" stroke="#eee" /><path d="M1.5 2h3.5v3H1.5zM10 2.5h1v2h-1z" fill="#eee" /></Art></TrayButton>
          <TrayButton aria-label="Bluetooth"><Art w={8} h={11}><rect width="8" height="11" rx="4" fill="#1787ea" /><path d="M2 3.5l4 4-2 2v-8l2 2-4 4" stroke="#fff" strokeWidth=".8" /></Art></TrayButton>
          <TrayButton aria-label="Network"><Art w={10}><path d="M1 9.5A9 9 0 0 1 9.5 1M3.5 9.5a6 6 0 0 1 6-6M6 9.5a3.5 3.5 0 0 1 3.5-3.5" stroke="#ccc" strokeWidth=".9" /><circle cx="8.8" cy="8.8" r=".9" fill="#fff" /></Art></TrayButton>
          <TrayButton aria-label="Volume"><Art w={12} h={10}><path d="M.5 3.5h2L5 1v8L2.5 6.5h-2zM6.5 3.5q1 1.5 0 3M8.3 2.2q1.8 2.8 0 5.6M10 1q2.5 4 0 8" stroke="#ddd" strokeWidth=".9" /></Art></TrayButton>
          <Language $w={22}>فا</Language>
          <TrayButton $w={45}>8:01 PM</TrayButton>
          <TrayButton $w={24} aria-label="Notifications"><Art w={11}><path d="M0 0h11v8.5H8.5V11L6 8.5H0z" fill="#fff" /><path d="M2 2.5h7M2 4.5h7M2 6.5h5" stroke="#666" strokeWidth=".8" /></Art></TrayButton>
        </Tray>
      </TaskBar>
    </AppShell>
  );
}
